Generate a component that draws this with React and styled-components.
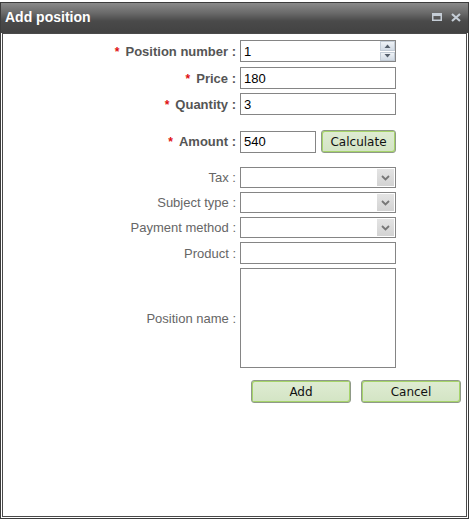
import React from "react";
import styled, { createGlobalStyle } from "styled-components";

const Global = createGlobalStyle`
  html, body { margin: 0; padding: 0; background: #fff; }
  body { font-family: "Liberation Sans", Arial, sans-serif; }
  * { box-sizing: border-box; }
`;

const Window = styled.div`
  margin-top: 2px;
  width: 469px;
  height: 517px;
  border: 1px solid #3c3c3c;
  padding: 0 1px 1px 1px;
  background: #fff;
  display: flex;
  flex-direction: column;
`;

const TitleBar = styled.div`
  height: 30px;
  flex: none;
  display: flex;
  align-items: center;
  justify-content: space-between;
  padding: 0 4px 0 4px;
  margin: 0 -1px;
  background: linear-gradient(#8a8a8a 0%, #686868 35%, #4a4a4a 60%, #424242 100%);
`;

const Title = styled.div`
  color: #fff;
  font-weight: bold;
  font-size: 14px;
  font-family: "Liberation Sans", Arial, sans-serif;
  margin-top: -2px;
`;

const Tools = styled.div`
  display: flex;
  align-items: center;
  gap: 9px;
  margin-right: 3px;
  margin-top: -2px;
`;

const Body = styled.div`
  flex: 1;
  border: 1px solid #4a4a4a;
  padding: 6px 5px 0 0;
  display: flex;
  flex-direction: column;
`;

const Row = styled.div`
  display: grid;
  grid-template-columns: 237px auto;
  align-items: center;
  margin-top: ${(p) => p.$mt || 0}px;
`;

const Label = styled.label`
  text-align: right;
  padding-right: 4px;
  font-size: 13px;
  color: ${(p) => (p.$req ? "#555" : "#666")};
  font-weight: ${(p) => (p.$req ? "bold" : "normal")};
  white-space: nowrap;
`;

const Star = styled.span`
  color: #e01010;
  margin-right: 6px;
  font-weight: bold;
  font-size: 12px;
`;

const Field = styled.div`
  display: flex;
  align-items: center;
  gap: 5px;
`;

const Input = styled.input`
  width: ${(p) => p.$w || 156}px;
  height: ${(p) => p.$h || 22}px;
  border: 1px solid #858585;
  padding: 0 3px;
  font-size: 13px;
  font-family: "Liberation Sans", Arial, sans-serif;
  color: #000;
  outline: none;
  background: #fff;
  margin: 0;
`;

const Spin = styled.div`
  position: relative;
  width: 156px;
  height: 22px;
`;

const SpinBtns = styled.div`
  position: absolute;
  right: 1px;
  top: 1px;
  bottom: 1px;
  width: 15px;
  display: flex;
  flex-direction: column;
  gap: 1px;
`;

const SpinBtn = styled.div`
  flex: 1;
  background: linear-gradient(#eef2f6, #d2dbe5);
  border: 1px solid #c3ccd6;
  display: flex;
  align-items: center;
  justify-content: center;
`;

const Select = styled.div`
  width: 156px;
  height: 21px;
  border: 1px solid #858585;
  display: flex;
  justify-content: flex-end;
  padding: 1px;
  background: #fff;
`;

const SelArrow = styled.div`
  width: 17px;
  background: linear-gradient(#e4e4e4, #d3d3d3);
  display: flex;
  align-items: center;
  justify-content: center;
`;

const TextArea = styled.textarea`
  width: 156px;
  height: 100px;
  border: 1px solid #858585;
  resize: none;
  outline: none;
  margin: 0;
  padding: 2px;
  display: block;
`;

const Button = styled.button`
  width: ${(p) => p.$w || 100}px;
  height: 23px;
  border: 1px solid #8f9a88;
  border-radius: 3px;
  background: linear-gradient(#dfecd3, #d3e4c4);
  box-shadow: inset 1px 1px 0 #a6d46a, inset -1px -1px 0 #a6d46a;
  font-family: "DejaVu Sans", Verdana, sans-serif;
  font-size: 12px;
  color: #111;
  padding: 0;
  margin: 0;
  cursor: pointer;
`;

const Buttons = styled.div`
  display: flex;
  justify-content: flex-end;
  gap: 10px;
  margin-top: 12px;
`;

const Chevron = () => (
  <svg width="9" height="6" viewBox="0 0 9 6">
    <path d="M1 1 L4.5 4.5 L8 1" fill="none" stroke="#777" strokeWidth="1.8" />
  </svg>
);

const Tri = ({ up }) => (
  <svg width="7" height="4" viewBox="0 0 7 4">
    <path d={up ? "M0.5 4 L3.5 0.5 L6.5 4 Z" : "M0.5 0 L3.5 3.5 L6.5 0 Z"} fill="#56606c" />
  </svg>
);

export default function App() {
  return (
    <>
      <Global />
      <Window>
        <TitleBar>
          <Title>Add position</Title>
          <Tools>
            <svg width="10" height="8" viewBox="0 0 10 8">
              <rect x="0.75" y="0.75" width="8.5" height="6.5" fill="none" stroke="#c5cdd6" strokeWidth="1.5" />
              <rect x="0.5" y="0.5" width="9" height="2.5" fill="#c5cdd6" />
            </svg>
            <svg width="10" height="9" viewBox="0 0 10 9">
              <path d="M1 1 L9 8 M9 1 L1 8" stroke="#c5cdd6" strokeWidth="2.2" />
            </svg>
          </Tools>
        </TitleBar>
        <Body>
          <Row>
            <Label $req><Star>*</Star>Position number :</Label>
            <Spin>
              <Input defaultValue="1" />
              <SpinBtns>
                <SpinBtn><Tri up /></SpinBtn>
                <SpinBtn><Tri /></SpinBtn>
              </SpinBtns>
            </Spin>
          </Row>
          <Row $mt={5}>
            <Label $req><Star>*</Star>Price :</Label>
            <Input defaultValue="180" />
          </Row>
          <Row $mt={4}>
            <Label $req><Star>*</Star>Quantity :</Label>
            <Input defaultValue="3" />
          </Row>
          <Row $mt={15}>
            <Label $req><Star>*</Star>Amount :</Label>
            <Field>
              <Input $w={76} defaultValue="540" />
              <Button $w={75}>Calculate</Button>
            </Field>
          </Row>
          <Row $mt={14}>
            <Label>Tax :</Label>
            <Select><SelArrow><Chevron /></SelArrow></Select>
          </Row>
          <Row $mt={4}>
            <Label>Subject type :</Label>
            <Select><SelArrow><Chevron /></SelArrow></Select>
          </Row>
          <Row $mt={4}>
            <Label>Payment method :</Label>
            <Select><SelArrow><Chevron /></SelArrow></Select>
          </Row>
          <Row $mt={4}>
            <Label>Product :</Label>
            <Input />
          </Row>
          <Row $mt={4}>
            <Label>Position name :</Label>
            <TextArea />
          </Row>
          <Buttons>
            <Button>Add</Button>
            <Button>Cancel</Button>
          </Buttons>
        </Body>
      </Window>
    </>
  );
}
